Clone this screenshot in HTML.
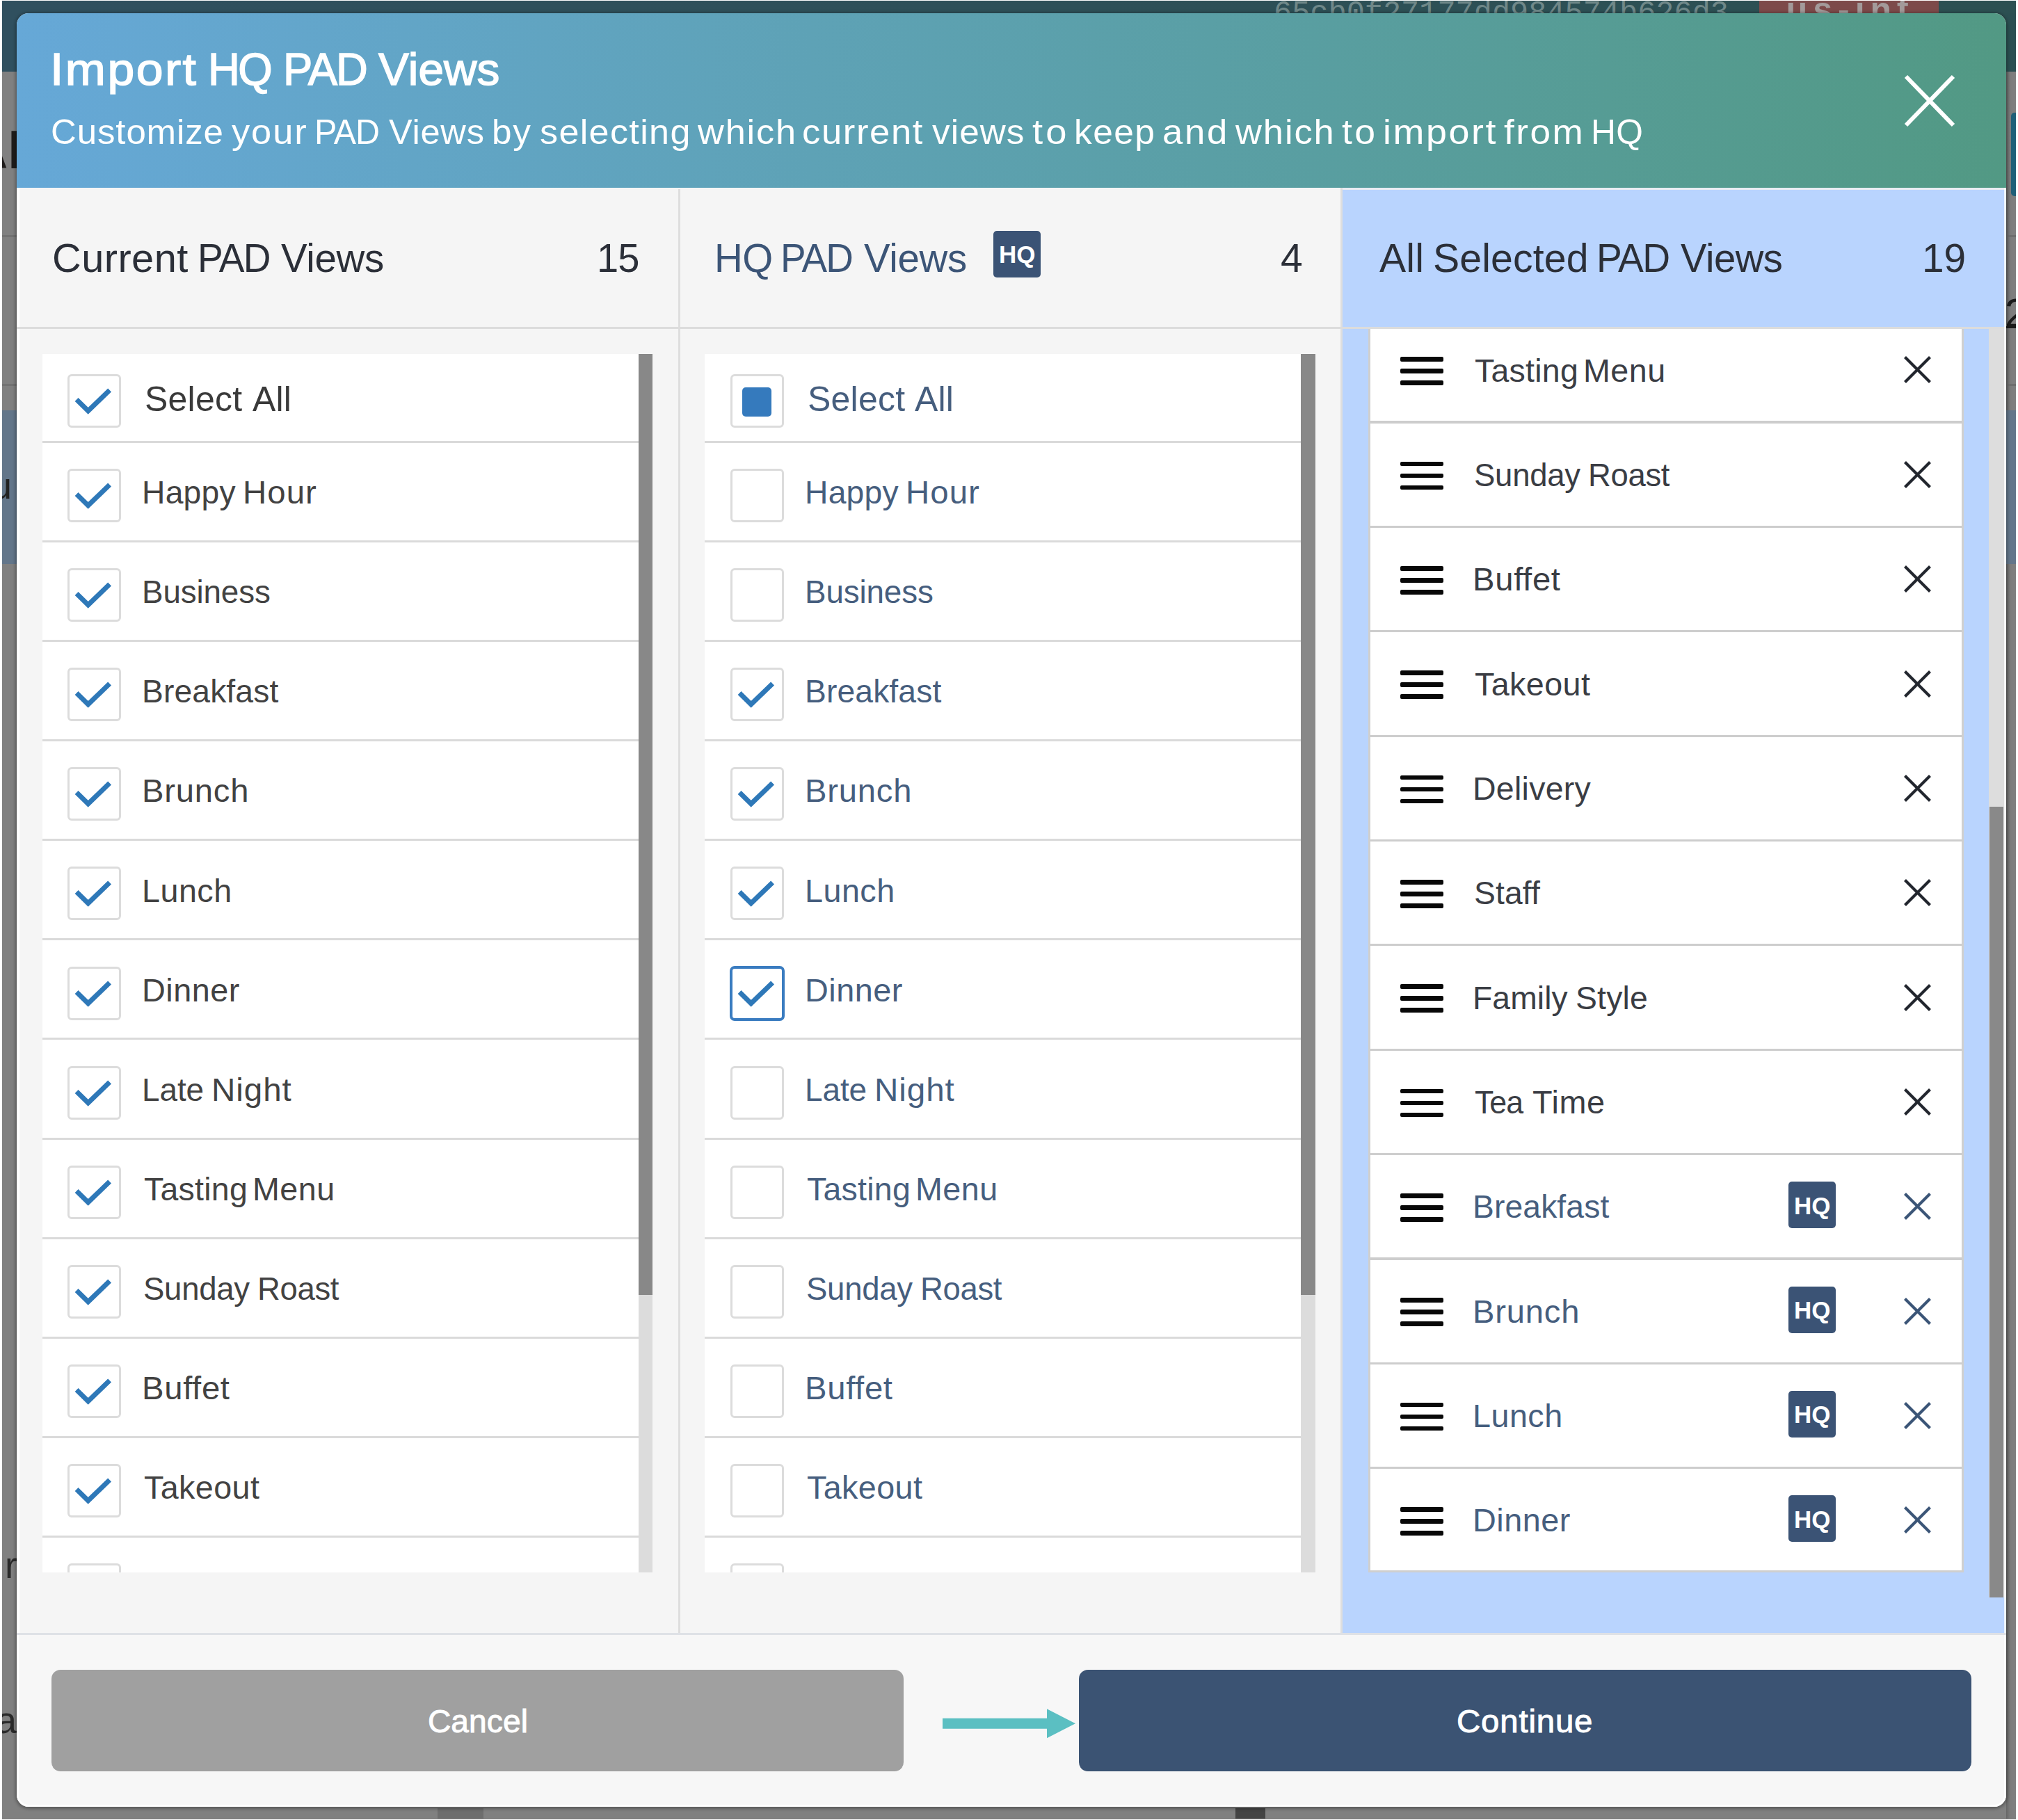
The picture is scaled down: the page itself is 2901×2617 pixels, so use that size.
<!DOCTYPE html>
<html><head><meta charset="utf-8"><title>Import HQ PAD Views</title>
<style>
html,body{margin:0;padding:0;background:#fff;}
body{width:2901px;height:2617px;position:relative;overflow:hidden;font-family:"Liberation Sans",sans-serif;}
.r{position:absolute;}
.t{position:absolute;white-space:nowrap;font-family:"Liberation Sans",sans-serif;}
.w{position:absolute;top:0;white-space:nowrap;}
</style></head><body>
<div class="r" style="left:3.0px;top:1.0px;width:2895.0px;height:2614.6px;background:#808080;"></div>
<div class="r" style="left:3.0px;top:1.0px;width:2895.0px;height:102.0px;background:linear-gradient(to right,#30505f,#2c5052);"></div>
<div class="r" style="left:1825px;top:1px;width:700px;height:18px;overflow:hidden"><div class="t" style="left:6px;top:-3px;font-family:'Liberation Mono',monospace;font-size:43.6px;line-height:43.6px;color:#6f8889">65cb0f27177dd984574b626d3</div></div>
<div class="r" style="left:2529px;top:1px;width:258px;height:18px;background:#7d4a4a;overflow:hidden"><div class="t" style="left:38.7px;top:-12.3px;font-size:50px;line-height:50px;font-weight:bold;color:#a39a9a;letter-spacing:8px">us-int</div></div>
<div class="r" style="left:3.0px;top:590.0px;width:21.0px;height:221.0px;background:#63768a;"></div>
<div class="r" style="left:3.0px;top:338.0px;width:21.0px;height:3.0px;background:#727272;"></div>
<div class="r" style="left:3.0px;top:552.0px;width:21.0px;height:3.0px;background:#727272;"></div>
<div class="r" style="left:3px;top:1px;width:21px;height:2614px;overflow:hidden"><div class="t" style="left:-48px;top:174.5px;font-size:78px;line-height:78px;font-weight:bold;color:#1f1c1b">AD</div><div class="t" style="left:-16px;top:670.3px;font-size:54px;line-height:54px;color:#222">u</div><div class="t" style="left:4px;top:2222.3px;font-size:54px;line-height:54px;color:#2a2a2a">r</div><div class="t" style="left:-9px;top:2444.8px;font-size:54px;line-height:54px;color:#2a2a2a">a</div></div>
<div class="r" style="left:2884.0px;top:103.0px;width:14.0px;height:2512.0px;background:linear-gradient(to right,#666,#7c7c7c 40%,#808080);"></div>
<div class="r" style="left:2884.0px;top:19.0px;width:14.0px;height:84.0px;background:#2b4f52;"></div>
<div class="r" style="left:2891.0px;top:162.0px;width:7.0px;height:120.0px;background:#1f5f78;border-radius:5px 0 0 5px"></div>
<div class="r" style="left:2886.0px;top:338.0px;width:12.0px;height:3.0px;background:#6e6e6e;"></div>
<div class="r" style="left:2886.0px;top:552.0px;width:12.0px;height:3.0px;background:#6e6e6e;"></div>
<div class="r" style="left:2884.0px;top:590.0px;width:14.0px;height:221.0px;background:#63768a;"></div>
<div class="r" style="left:2884px;top:400px;width:14px;height:80px;overflow:hidden"><div class="t" style="left:-2px;top:21px;font-size:58px;line-height:58px;color:#1a1a1a">2</div><div class="r" style="left:0;top:69px;width:14px;height:3px;background:#1a1a1a"></div></div>
<div class="r" style="left:629.0px;top:2600.0px;width:66.0px;height:15.0px;background:#6d6d6d;"></div>
<div class="r" style="left:1776.0px;top:2600.0px;width:43.0px;height:15.0px;background:#444;"></div>
<div class="r" style="left:24px;top:19px;width:2860px;height:2579px;border-radius:17px;overflow:hidden;background:#f5f5f5;box-shadow:0 1px 4px 2px rgba(0,0,0,.3)">
<div class="r" style="left:-24px;top:-19px;width:2901px;height:2617px">
<div class="r" style="left:24.0px;top:19.0px;width:2860.0px;height:251.0px;background:linear-gradient(to right,#66a8d7,#529984);"></div>
<div class="r" style="left:24.5px;top:270.0px;width:4.0px;height:2079.0px;background:linear-gradient(to right,#fff 60%,#f5f5f5);"></div>
<div class="t" style="left:0;top:66.6px;font-size:65.5px;line-height:65.5px;color:#fff;-webkit-text-stroke:1.5px #fff;"><span class="w" style="left:71.6px;letter-spacing:2.33px;transform:scaleX(1.0644);transform-origin:0 50%;">Import</span> <span class="w" style="left:298.6px;letter-spacing:-2.70px;transform:scaleX(0.9703);transform-origin:0 50%;">HQ</span> <span class="w" style="left:406.6px;letter-spacing:-1.95px;transform:scaleX(0.9680);transform-origin:0 50%;">PAD</span> <span class="w" style="left:543.5px;letter-spacing:0.11px;transform:scaleX(1.0026);transform-origin:0 50%;">Views</span></div>
<div class="t" style="left:0;top:165.4px;font-size:49.5px;line-height:49.5px;color:#fff;"><span class="w" style="left:72.8px;letter-spacing:0.86px;transform:scaleX(1.0300);transform-origin:0 50%;">Customize</span> <span class="w" style="left:332.5px;letter-spacing:1.83px;transform:scaleX(1.0573);transform-origin:0 50%;">your</span> <span class="w" style="left:452.0px;letter-spacing:-1.00px;transform:scaleX(0.9783);transform-origin:0 50%;">PAD</span> <span class="w" style="left:558.8px;letter-spacing:0.71px;transform:scaleX(1.0219);transform-origin:0 50%;">Views</span> <span class="w" style="left:707.3px;letter-spacing:1.75px;transform:scaleX(1.0357);transform-origin:0 50%;">by</span> <span class="w" style="left:775.7px;letter-spacing:1.26px;transform:scaleX(1.0532);transform-origin:0 50%;">selecting</span> <span class="w" style="left:1002.8px;letter-spacing:1.75px;transform:scaleX(1.0569);transform-origin:0 50%;">which</span> <span class="w" style="left:1153.3px;letter-spacing:1.55px;transform:scaleX(1.0612);transform-origin:0 50%;">current</span> <span class="w" style="left:1339.5px;letter-spacing:1.06px;transform:scaleX(1.0348);transform-origin:0 50%;">views</span> <span class="w" style="left:1483.9px;letter-spacing:3.75px;transform:scaleX(1.0987);transform-origin:0 50%;">to</span> <span class="w" style="left:1543.6px;letter-spacing:1.35px;transform:scaleX(1.0397);transform-origin:0 50%;">keep</span> <span class="w" style="left:1670.7px;letter-spacing:2.50px;transform:scaleX(1.0649);transform-origin:0 50%;">and</span> <span class="w" style="left:1776.0px;letter-spacing:1.82px;transform:scaleX(1.0593);transform-origin:0 50%;">which</span> <span class="w" style="left:1929.1px;letter-spacing:3.10px;transform:scaleX(1.0816);transform-origin:0 50%;">to</span> <span class="w" style="left:1987.6px;letter-spacing:2.36px;transform:scaleX(1.0881);transform-origin:0 50%;">import</span> <span class="w" style="left:2162.4px;letter-spacing:2.33px;transform:scaleX(1.0737);transform-origin:0 50%;">from</span> <span class="w" style="left:2287.0px;letter-spacing:0.25px;transform:scaleX(1.0037);transform-origin:0 50%;">HQ</span></div>
<svg class="r" style="left:2734px;top:104px" width="80" height="82" viewBox="0 0 80 82"><path d="M6,6 L74,76 M74,6 L6,76" stroke="#fff" stroke-width="6" fill="none"/></svg>
<div class="r" style="left:1930.0px;top:270.0px;width:954.0px;height:2078.0px;background:#b9d4fe;"></div>
<div class="r" style="left:1930.0px;top:270.0px;width:954.0px;height:3.0px;background:#e9ecf2;"></div>
<div class="r" style="left:975.0px;top:272.0px;width:3.0px;height:2077.0px;background:#dedede;"></div>
<div class="r" style="left:1927.0px;top:270.0px;width:3.0px;height:2079.0px;background:#dedede;"></div>
<div class="r" style="left:24.0px;top:470.2px;width:2860.0px;height:3.2px;background:#dcdcdc;"></div>
<div class="t" style="left:0;top:342.7px;font-size:57px;line-height:57px;color:#2b2f38;"><span class="w" style="left:74.8px;letter-spacing:0.43px;transform:scaleX(1.0139);transform-origin:0 50%;">Current</span> <span class="w" style="left:284.1px;letter-spacing:-1.85px;transform:scaleX(0.9648);transform-origin:0 50%;">PAD</span> <span class="w" style="left:403.9px;letter-spacing:-0.36px;transform:scaleX(0.9903);transform-origin:0 50%;">Views</span></div>
<div class="t" style="left:858.1px;letter-spacing:-1.00px;transform:scaleX(0.9825);transform-origin:0 50%;top:342.7px;font-size:57px;line-height:57px;color:#2b2f38;">15</div>
<div class="t" style="left:0;top:342.7px;font-size:57px;line-height:57px;color:#3c5577;"><span class="w" style="left:1026.8px;letter-spacing:-0.60px;transform:scaleX(0.9923);transform-origin:0 50%;">HQ</span> <span class="w" style="left:1122.1px;letter-spacing:-1.98px;transform:scaleX(0.9624);transform-origin:0 50%;">PAD</span> <span class="w" style="left:1242.4px;letter-spacing:-0.36px;transform:scaleX(0.9903);transform-origin:0 50%;">Views</span></div>
<div class="t" style="left:1841.0px;top:342.7px;font-size:57px;line-height:57px;color:#2b2f38;">4</div>
<div class="t" style="left:0;top:342.7px;font-size:57px;line-height:57px;color:#2b2f38;"><span class="w" style="left:1983.3px;letter-spacing:0.12px;transform:scaleX(1.0042);transform-origin:0 50%;">All</span> <span class="w" style="left:2059.7px;letter-spacing:0.13px;transform:scaleX(1.0042);transform-origin:0 50%;">Selected</span> <span class="w" style="left:2294.5px;letter-spacing:-1.70px;transform:scaleX(0.9676);transform-origin:0 50%;">PAD</span> <span class="w" style="left:2415.9px;letter-spacing:-0.53px;transform:scaleX(0.9859);transform-origin:0 50%;">Views</span></div>
<div class="t" style="left:2763.0px;letter-spacing:-0.20px;transform:scaleX(0.9965);transform-origin:0 50%;top:342.7px;font-size:57px;line-height:57px;color:#2b2f38;">19</div>
<div class="r" style="left:1428px;top:332px;width:68px;height:67px;background:#3b5375;border-radius:5px"></div>
<div class="t" style="left:1436.0px;top:348.4px;font-size:35px;line-height:35px;color:#fff;font-weight:bold;">HQ</div>
<div class="r" style="left:60.5px;top:509px;width:877.5px;height:1752px;overflow:hidden;background:#fff">
<div class="r" style="left:-60.5px;top:-509px;width:2901px;height:2617px">
<div class="r" style="left:60.5px;top:633.8px;width:857.0px;height:3.0px;background:#dadada;"></div>
<div class="r" style="left:60.5px;top:776.9px;width:857.0px;height:3.0px;background:#dadada;"></div>
<div class="r" style="left:60.5px;top:920.0px;width:857.0px;height:3.0px;background:#dadada;"></div>
<div class="r" style="left:60.5px;top:1063.1px;width:857.0px;height:3.0px;background:#dadada;"></div>
<div class="r" style="left:60.5px;top:1206.2px;width:857.0px;height:3.0px;background:#dadada;"></div>
<div class="r" style="left:60.5px;top:1349.3px;width:857.0px;height:3.0px;background:#dadada;"></div>
<div class="r" style="left:60.5px;top:1492.4px;width:857.0px;height:3.0px;background:#dadada;"></div>
<div class="r" style="left:60.5px;top:1635.5px;width:857.0px;height:3.0px;background:#dadada;"></div>
<div class="r" style="left:60.5px;top:1778.6px;width:857.0px;height:3.0px;background:#dadada;"></div>
<div class="r" style="left:60.5px;top:1921.7px;width:857.0px;height:3.0px;background:#dadada;"></div>
<div class="r" style="left:60.5px;top:2064.8px;width:857.0px;height:3.0px;background:#dadada;"></div>
<div class="r" style="left:60.5px;top:2207.9px;width:857.0px;height:3.0px;background:#dadada;"></div>
<div class="r" style="left:60.5px;top:2351.0px;width:857.0px;height:3.0px;background:#dadada;"></div>
<div class="r" style="left:97.0px;top:538.0px;width:77px;height:77px;box-sizing:border-box;border:3px solid #dcdcdc;border-radius:6px;background:#fff"><div style="position:absolute;left:-3px;top:-3px;width:77px;height:77px"><svg width="77" height="77" viewBox="0 0 77 77" style="position:absolute;left:0;top:0"><path d="M13.1,36.6 L29.7,52.8 L60.6,23" stroke="#2e78b8" stroke-width="7" fill="none"/></svg></div></div>
<div class="t" style="left:0;top:549.1px;font-size:49.5px;line-height:49.5px;color:#3a3a3a;"><span class="w" style="left:208.0px;letter-spacing:0.24px;transform:scaleX(1.0089);transform-origin:0 50%;">Select</span> <span class="w" style="left:362.5px;letter-spacing:0.22px;transform:scaleX(1.0087);transform-origin:0 50%;">All</span></div>
<div class="r" style="left:97.0px;top:674.0px;width:77px;height:77px;box-sizing:border-box;border:3px solid #dcdcdc;border-radius:6px;background:#fff"><div style="position:absolute;left:-3px;top:-3px;width:77px;height:77px"><svg width="77" height="77" viewBox="0 0 77 77" style="position:absolute;left:0;top:0"><path d="M13.1,36.6 L29.7,52.8 L60.6,23" stroke="#2e78b8" stroke-width="7" fill="none"/></svg></div></div>
<div class="t" style="left:0;top:685.1px;font-size:46px;line-height:46px;color:#424242;"><span class="w" style="left:203.9px;letter-spacing:0.20px;transform:scaleX(1.0062);transform-origin:0 50%;">Happy</span> <span class="w" style="left:349.4px;letter-spacing:0.98px;transform:scaleX(1.0311);transform-origin:0 50%;">Hour</span></div>
<div class="r" style="left:97.0px;top:817.1px;width:77px;height:77px;box-sizing:border-box;border:3px solid #dcdcdc;border-radius:6px;background:#fff"><div style="position:absolute;left:-3px;top:-3px;width:77px;height:77px"><svg width="77" height="77" viewBox="0 0 77 77" style="position:absolute;left:0;top:0"><path d="M13.1,36.6 L29.7,52.8 L60.6,23" stroke="#2e78b8" stroke-width="7" fill="none"/></svg></div></div>
<div class="t" style="left:203.9px;letter-spacing:-0.13px;transform:scaleX(0.9950);transform-origin:0 50%;top:828.2px;font-size:46px;line-height:46px;color:#424242;">Business</div>
<div class="r" style="left:97.0px;top:960.2px;width:77px;height:77px;box-sizing:border-box;border:3px solid #dcdcdc;border-radius:6px;background:#fff"><div style="position:absolute;left:-3px;top:-3px;width:77px;height:77px"><svg width="77" height="77" viewBox="0 0 77 77" style="position:absolute;left:0;top:0"><path d="M13.1,36.6 L29.7,52.8 L60.6,23" stroke="#2e78b8" stroke-width="7" fill="none"/></svg></div></div>
<div class="t" style="left:203.9px;letter-spacing:0.12px;transform:scaleX(1.0050);transform-origin:0 50%;top:971.3px;font-size:46px;line-height:46px;color:#424242;">Breakfast</div>
<div class="r" style="left:97.0px;top:1103.3px;width:77px;height:77px;box-sizing:border-box;border:3px solid #dcdcdc;border-radius:6px;background:#fff"><div style="position:absolute;left:-3px;top:-3px;width:77px;height:77px"><svg width="77" height="77" viewBox="0 0 77 77" style="position:absolute;left:0;top:0"><path d="M13.1,36.6 L29.7,52.8 L60.6,23" stroke="#2e78b8" stroke-width="7" fill="none"/></svg></div></div>
<div class="t" style="left:203.8px;letter-spacing:0.74px;transform:scaleX(1.0266);transform-origin:0 50%;top:1114.4px;font-size:46px;line-height:46px;color:#424242;">Brunch</div>
<div class="r" style="left:97.0px;top:1246.4px;width:77px;height:77px;box-sizing:border-box;border:3px solid #dcdcdc;border-radius:6px;background:#fff"><div style="position:absolute;left:-3px;top:-3px;width:77px;height:77px"><svg width="77" height="77" viewBox="0 0 77 77" style="position:absolute;left:0;top:0"><path d="M13.1,36.6 L29.7,52.8 L60.6,23" stroke="#2e78b8" stroke-width="7" fill="none"/></svg></div></div>
<div class="t" style="left:203.8px;letter-spacing:0.46px;transform:scaleX(1.0155);transform-origin:0 50%;top:1257.5px;font-size:46px;line-height:46px;color:#424242;">Lunch</div>
<div class="r" style="left:97.0px;top:1389.5px;width:77px;height:77px;box-sizing:border-box;border:3px solid #dcdcdc;border-radius:6px;background:#fff"><div style="position:absolute;left:-3px;top:-3px;width:77px;height:77px"><svg width="77" height="77" viewBox="0 0 77 77" style="position:absolute;left:0;top:0"><path d="M13.1,36.6 L29.7,52.8 L60.6,23" stroke="#2e78b8" stroke-width="7" fill="none"/></svg></div></div>
<div class="t" style="left:203.8px;letter-spacing:0.46px;transform:scaleX(1.0176);transform-origin:0 50%;top:1400.6px;font-size:46px;line-height:46px;color:#424242;">Dinner</div>
<div class="r" style="left:97.0px;top:1532.6px;width:77px;height:77px;box-sizing:border-box;border:3px solid #dcdcdc;border-radius:6px;background:#fff"><div style="position:absolute;left:-3px;top:-3px;width:77px;height:77px"><svg width="77" height="77" viewBox="0 0 77 77" style="position:absolute;left:0;top:0"><path d="M13.1,36.6 L29.7,52.8 L60.6,23" stroke="#2e78b8" stroke-width="7" fill="none"/></svg></div></div>
<div class="t" style="left:0;top:1543.7px;font-size:46px;line-height:46px;color:#424242;"><span class="w" style="left:203.9px;letter-spacing:-0.07px;transform:scaleX(0.9976);transform-origin:0 50%;">Late</span> <span class="w" style="left:303.9px;letter-spacing:0.89px;transform:scaleX(1.0345);transform-origin:0 50%;">Night</span></div>
<div class="r" style="left:97.0px;top:1675.7px;width:77px;height:77px;box-sizing:border-box;border:3px solid #dcdcdc;border-radius:6px;background:#fff"><div style="position:absolute;left:-3px;top:-3px;width:77px;height:77px"><svg width="77" height="77" viewBox="0 0 77 77" style="position:absolute;left:0;top:0"><path d="M13.1,36.6 L29.7,52.8 L60.6,23" stroke="#2e78b8" stroke-width="7" fill="none"/></svg></div></div>
<div class="t" style="left:0;top:1686.8px;font-size:46px;line-height:46px;color:#424242;"><span class="w" style="left:206.9px;letter-spacing:0.25px;transform:scaleX(1.0106);transform-origin:0 50%;">Tasting</span> <span class="w" style="left:363.0px;letter-spacing:0.50px;transform:scaleX(1.0139);transform-origin:0 50%;">Menu</span></div>
<div class="r" style="left:97.0px;top:1818.8px;width:77px;height:77px;box-sizing:border-box;border:3px solid #dcdcdc;border-radius:6px;background:#fff"><div style="position:absolute;left:-3px;top:-3px;width:77px;height:77px"><svg width="77" height="77" viewBox="0 0 77 77" style="position:absolute;left:0;top:0"><path d="M13.1,36.6 L29.7,52.8 L60.6,23" stroke="#2e78b8" stroke-width="7" fill="none"/></svg></div></div>
<div class="t" style="left:0;top:1829.9px;font-size:46px;line-height:46px;color:#424242;"><span class="w" style="left:205.9px;letter-spacing:-0.29px;transform:scaleX(0.9906);transform-origin:0 50%;">Sunday</span> <span class="w" style="left:370.2px;letter-spacing:-0.34px;transform:scaleX(0.9884);transform-origin:0 50%;">Roast</span></div>
<div class="r" style="left:97.0px;top:1961.9px;width:77px;height:77px;box-sizing:border-box;border:3px solid #dcdcdc;border-radius:6px;background:#fff"><div style="position:absolute;left:-3px;top:-3px;width:77px;height:77px"><svg width="77" height="77" viewBox="0 0 77 77" style="position:absolute;left:0;top:0"><path d="M13.1,36.6 L29.7,52.8 L60.6,23" stroke="#2e78b8" stroke-width="7" fill="none"/></svg></div></div>
<div class="t" style="left:203.8px;letter-spacing:0.64px;transform:scaleX(1.0278);transform-origin:0 50%;top:1973.0px;font-size:46px;line-height:46px;color:#424242;">Buffet</div>
<div class="r" style="left:97.0px;top:2105.0px;width:77px;height:77px;box-sizing:border-box;border:3px solid #dcdcdc;border-radius:6px;background:#fff"><div style="position:absolute;left:-3px;top:-3px;width:77px;height:77px"><svg width="77" height="77" viewBox="0 0 77 77" style="position:absolute;left:0;top:0"><path d="M13.1,36.6 L29.7,52.8 L60.6,23" stroke="#2e78b8" stroke-width="7" fill="none"/></svg></div></div>
<div class="t" style="left:206.9px;letter-spacing:0.40px;transform:scaleX(1.0150);transform-origin:0 50%;top:2116.1px;font-size:46px;line-height:46px;color:#424242;">Takeout</div>
<div class="r" style="left:97.0px;top:2248.1px;width:77px;height:77px;box-sizing:border-box;border:3px solid #dcdcdc;border-radius:6px;background:#fff"><div style="position:absolute;left:-3px;top:-3px;width:77px;height:77px"><svg width="77" height="77" viewBox="0 0 77 77" style="position:absolute;left:0;top:0"><path d="M13.1,36.6 L29.7,52.8 L60.6,23" stroke="#2e78b8" stroke-width="7" fill="none"/></svg></div></div>
<div class="r" style="left:917.5px;top:509.0px;width:20.5px;height:1752.0px;background:#dcdcdc;"></div>
<div class="r" style="left:917.5px;top:509.0px;width:20.5px;height:1353.0px;background:#888;"></div>
</div></div>
<div class="r" style="left:1013.4px;top:509px;width:877.5px;height:1752px;overflow:hidden;background:#fff">
<div class="r" style="left:-1013.4px;top:-509px;width:2901px;height:2617px">
<div class="r" style="left:1013.4px;top:633.8px;width:857.0px;height:3.0px;background:#dadada;"></div>
<div class="r" style="left:1013.4px;top:776.9px;width:857.0px;height:3.0px;background:#dadada;"></div>
<div class="r" style="left:1013.4px;top:920.0px;width:857.0px;height:3.0px;background:#dadada;"></div>
<div class="r" style="left:1013.4px;top:1063.1px;width:857.0px;height:3.0px;background:#dadada;"></div>
<div class="r" style="left:1013.4px;top:1206.2px;width:857.0px;height:3.0px;background:#dadada;"></div>
<div class="r" style="left:1013.4px;top:1349.3px;width:857.0px;height:3.0px;background:#dadada;"></div>
<div class="r" style="left:1013.4px;top:1492.4px;width:857.0px;height:3.0px;background:#dadada;"></div>
<div class="r" style="left:1013.4px;top:1635.5px;width:857.0px;height:3.0px;background:#dadada;"></div>
<div class="r" style="left:1013.4px;top:1778.6px;width:857.0px;height:3.0px;background:#dadada;"></div>
<div class="r" style="left:1013.4px;top:1921.7px;width:857.0px;height:3.0px;background:#dadada;"></div>
<div class="r" style="left:1013.4px;top:2064.8px;width:857.0px;height:3.0px;background:#dadada;"></div>
<div class="r" style="left:1013.4px;top:2207.9px;width:857.0px;height:3.0px;background:#dadada;"></div>
<div class="r" style="left:1013.4px;top:2351.0px;width:857.0px;height:3.0px;background:#dadada;"></div>
<div class="r" style="left:1049.9px;top:538.0px;width:77px;height:77px;box-sizing:border-box;border:3px solid #dcdcdc;border-radius:6px;background:#fff"><div style="position:absolute;left:-3px;top:-3px;width:77px;height:77px"><div style="position:absolute;left:17.5px;top:18.5px;width:42px;height:42px;border-radius:5px;background:#357abd"></div></div></div>
<div class="t" style="left:0;top:549.1px;font-size:49.5px;line-height:49.5px;color:#465e7e;"><span class="w" style="left:1160.9px;letter-spacing:0.24px;transform:scaleX(1.0089);transform-origin:0 50%;">Select</span> <span class="w" style="left:1315.4px;letter-spacing:0.22px;transform:scaleX(1.0087);transform-origin:0 50%;">All</span></div>
<div class="r" style="left:1049.9px;top:674.0px;width:77px;height:77px;box-sizing:border-box;border:3px solid #dcdcdc;border-radius:6px;background:#fff"><div style="position:absolute;left:-3px;top:-3px;width:77px;height:77px"></div></div>
<div class="t" style="left:0;top:685.1px;font-size:46px;line-height:46px;color:#465e7e;"><span class="w" style="left:1156.8px;letter-spacing:0.20px;transform:scaleX(1.0062);transform-origin:0 50%;">Happy</span> <span class="w" style="left:1302.3px;letter-spacing:0.98px;transform:scaleX(1.0311);transform-origin:0 50%;">Hour</span></div>
<div class="r" style="left:1049.9px;top:817.1px;width:77px;height:77px;box-sizing:border-box;border:3px solid #dcdcdc;border-radius:6px;background:#fff"><div style="position:absolute;left:-3px;top:-3px;width:77px;height:77px"></div></div>
<div class="t" style="left:1156.8px;letter-spacing:-0.13px;transform:scaleX(0.9950);transform-origin:0 50%;top:828.2px;font-size:46px;line-height:46px;color:#465e7e;">Business</div>
<div class="r" style="left:1049.9px;top:960.2px;width:77px;height:77px;box-sizing:border-box;border:3px solid #dcdcdc;border-radius:6px;background:#fff"><div style="position:absolute;left:-3px;top:-3px;width:77px;height:77px"><svg width="77" height="77" viewBox="0 0 77 77" style="position:absolute;left:0;top:0"><path d="M13.1,36.6 L29.7,52.8 L60.6,23" stroke="#2e78b8" stroke-width="7" fill="none"/></svg></div></div>
<div class="t" style="left:1156.8px;letter-spacing:0.12px;transform:scaleX(1.0050);transform-origin:0 50%;top:971.3px;font-size:46px;line-height:46px;color:#465e7e;">Breakfast</div>
<div class="r" style="left:1049.9px;top:1103.3px;width:77px;height:77px;box-sizing:border-box;border:3px solid #dcdcdc;border-radius:6px;background:#fff"><div style="position:absolute;left:-3px;top:-3px;width:77px;height:77px"><svg width="77" height="77" viewBox="0 0 77 77" style="position:absolute;left:0;top:0"><path d="M13.1,36.6 L29.7,52.8 L60.6,23" stroke="#2e78b8" stroke-width="7" fill="none"/></svg></div></div>
<div class="t" style="left:1156.7px;letter-spacing:0.74px;transform:scaleX(1.0266);transform-origin:0 50%;top:1114.4px;font-size:46px;line-height:46px;color:#465e7e;">Brunch</div>
<div class="r" style="left:1049.9px;top:1246.4px;width:77px;height:77px;box-sizing:border-box;border:3px solid #dcdcdc;border-radius:6px;background:#fff"><div style="position:absolute;left:-3px;top:-3px;width:77px;height:77px"><svg width="77" height="77" viewBox="0 0 77 77" style="position:absolute;left:0;top:0"><path d="M13.1,36.6 L29.7,52.8 L60.6,23" stroke="#2e78b8" stroke-width="7" fill="none"/></svg></div></div>
<div class="t" style="left:1156.7px;letter-spacing:0.46px;transform:scaleX(1.0155);transform-origin:0 50%;top:1257.5px;font-size:46px;line-height:46px;color:#465e7e;">Lunch</div>
<div class="r" style="left:1048.9px;top:1388.5px;width:79px;height:79px;box-sizing:border-box;border:4px solid #3a7cc0;border-radius:7px;background:#fff"><div style="position:absolute;left:-3px;top:-3px;width:77px;height:77px"><svg width="77" height="77" viewBox="0 0 77 77" style="position:absolute;left:0;top:0"><path d="M13.1,36.6 L29.7,52.8 L60.6,23" stroke="#2e78b8" stroke-width="7" fill="none"/></svg></div></div>
<div class="t" style="left:1156.7px;letter-spacing:0.46px;transform:scaleX(1.0176);transform-origin:0 50%;top:1400.6px;font-size:46px;line-height:46px;color:#465e7e;">Dinner</div>
<div class="r" style="left:1049.9px;top:1532.6px;width:77px;height:77px;box-sizing:border-box;border:3px solid #dcdcdc;border-radius:6px;background:#fff"><div style="position:absolute;left:-3px;top:-3px;width:77px;height:77px"></div></div>
<div class="t" style="left:0;top:1543.7px;font-size:46px;line-height:46px;color:#465e7e;"><span class="w" style="left:1156.8px;letter-spacing:-0.07px;transform:scaleX(0.9976);transform-origin:0 50%;">Late</span> <span class="w" style="left:1256.8px;letter-spacing:0.89px;transform:scaleX(1.0345);transform-origin:0 50%;">Night</span></div>
<div class="r" style="left:1049.9px;top:1675.7px;width:77px;height:77px;box-sizing:border-box;border:3px solid #dcdcdc;border-radius:6px;background:#fff"><div style="position:absolute;left:-3px;top:-3px;width:77px;height:77px"></div></div>
<div class="t" style="left:0;top:1686.8px;font-size:46px;line-height:46px;color:#465e7e;"><span class="w" style="left:1159.8px;letter-spacing:0.25px;transform:scaleX(1.0106);transform-origin:0 50%;">Tasting</span> <span class="w" style="left:1315.9px;letter-spacing:0.50px;transform:scaleX(1.0139);transform-origin:0 50%;">Menu</span></div>
<div class="r" style="left:1049.9px;top:1818.8px;width:77px;height:77px;box-sizing:border-box;border:3px solid #dcdcdc;border-radius:6px;background:#fff"><div style="position:absolute;left:-3px;top:-3px;width:77px;height:77px"></div></div>
<div class="t" style="left:0;top:1829.9px;font-size:46px;line-height:46px;color:#465e7e;"><span class="w" style="left:1158.8px;letter-spacing:-0.29px;transform:scaleX(0.9906);transform-origin:0 50%;">Sunday</span> <span class="w" style="left:1323.1px;letter-spacing:-0.34px;transform:scaleX(0.9884);transform-origin:0 50%;">Roast</span></div>
<div class="r" style="left:1049.9px;top:1961.9px;width:77px;height:77px;box-sizing:border-box;border:3px solid #dcdcdc;border-radius:6px;background:#fff"><div style="position:absolute;left:-3px;top:-3px;width:77px;height:77px"></div></div>
<div class="t" style="left:1156.7px;letter-spacing:0.64px;transform:scaleX(1.0278);transform-origin:0 50%;top:1973.0px;font-size:46px;line-height:46px;color:#465e7e;">Buffet</div>
<div class="r" style="left:1049.9px;top:2105.0px;width:77px;height:77px;box-sizing:border-box;border:3px solid #dcdcdc;border-radius:6px;background:#fff"><div style="position:absolute;left:-3px;top:-3px;width:77px;height:77px"></div></div>
<div class="t" style="left:1159.8px;letter-spacing:0.40px;transform:scaleX(1.0150);transform-origin:0 50%;top:2116.1px;font-size:46px;line-height:46px;color:#465e7e;">Takeout</div>
<div class="r" style="left:1049.9px;top:2248.1px;width:77px;height:77px;box-sizing:border-box;border:3px solid #dcdcdc;border-radius:6px;background:#fff"><div style="position:absolute;left:-3px;top:-3px;width:77px;height:77px"></div></div>
<div class="r" style="left:1870.4px;top:509.0px;width:20.5px;height:1752.0px;background:#dcdcdc;"></div>
<div class="r" style="left:1870.4px;top:509.0px;width:20.5px;height:1353.0px;background:#888;"></div>
</div></div>
<div class="r" style="left:1967px;top:473.4px;width:855.5px;height:1788.1px;overflow:hidden;background:#fff;box-sizing:border-box;border:solid #cfcfcf;border-width:0 3px 3px 3px">
<div class="r" style="left:-1970px;top:-473.4px;width:2901px;height:2617px">
<div class="r" style="left:1967.0px;top:605.4px;width:855.5px;height:3.4px;background:#cdcdcd;"></div>
<div class="r" style="left:1967.0px;top:755.8px;width:855.5px;height:3.4px;background:#cdcdcd;"></div>
<div class="r" style="left:1967.0px;top:906.1px;width:855.5px;height:3.4px;background:#cdcdcd;"></div>
<div class="r" style="left:1967.0px;top:1056.5px;width:855.5px;height:3.4px;background:#cdcdcd;"></div>
<div class="r" style="left:1967.0px;top:1206.8px;width:855.5px;height:3.4px;background:#cdcdcd;"></div>
<div class="r" style="left:1967.0px;top:1357.1px;width:855.5px;height:3.4px;background:#cdcdcd;"></div>
<div class="r" style="left:1967.0px;top:1507.5px;width:855.5px;height:3.4px;background:#cdcdcd;"></div>
<div class="r" style="left:1967.0px;top:1657.9px;width:855.5px;height:3.4px;background:#cdcdcd;"></div>
<div class="r" style="left:1967.0px;top:1808.2px;width:855.5px;height:3.4px;background:#cdcdcd;"></div>
<div class="r" style="left:1967.0px;top:1958.5px;width:855.5px;height:3.4px;background:#cdcdcd;"></div>
<div class="r" style="left:1967.0px;top:2108.9px;width:855.5px;height:3.4px;background:#cdcdcd;"></div>
<div class="r" style="left:2013.0px;top:513.3px;width:62.0px;height:6.7px;background:#080808;border-radius:2px"></div>
<div class="r" style="left:2013.0px;top:530.3px;width:62.0px;height:6.7px;background:#080808;border-radius:2px"></div>
<div class="r" style="left:2013.0px;top:547.3px;width:62.0px;height:6.7px;background:#080808;border-radius:2px"></div>
<div class="t" style="left:0;top:509.6px;font-size:46px;line-height:46px;color:#3a3d44;"><span class="w" style="left:2119.8px;letter-spacing:0.25px;transform:scaleX(1.0106);transform-origin:0 50%;">Tasting</span> <span class="w" style="left:2275.9px;letter-spacing:0.50px;transform:scaleX(1.0139);transform-origin:0 50%;">Menu</span></div>
<svg class="r" style="left:2734px;top:509.4px" width="45" height="45" viewBox="0 0 45 45"><path d="M4.5,4.5 L40.5,40.5 M40.5,4.5 L4.5,40.5" stroke="#22262e" stroke-width="4.2" fill="none"/></svg>
<div class="r" style="left:2013.0px;top:663.6px;width:62.0px;height:6.7px;background:#080808;border-radius:2px"></div>
<div class="r" style="left:2013.0px;top:680.6px;width:62.0px;height:6.7px;background:#080808;border-radius:2px"></div>
<div class="r" style="left:2013.0px;top:697.6px;width:62.0px;height:6.7px;background:#080808;border-radius:2px"></div>
<div class="t" style="left:0;top:659.9px;font-size:46px;line-height:46px;color:#3a3d44;"><span class="w" style="left:2118.8px;letter-spacing:-0.29px;transform:scaleX(0.9906);transform-origin:0 50%;">Sunday</span> <span class="w" style="left:2283.1px;letter-spacing:-0.34px;transform:scaleX(0.9884);transform-origin:0 50%;">Roast</span></div>
<svg class="r" style="left:2734px;top:659.8px" width="45" height="45" viewBox="0 0 45 45"><path d="M4.5,4.5 L40.5,40.5 M40.5,4.5 L4.5,40.5" stroke="#22262e" stroke-width="4.2" fill="none"/></svg>
<div class="r" style="left:2013.0px;top:814.0px;width:62.0px;height:6.7px;background:#080808;border-radius:2px"></div>
<div class="r" style="left:2013.0px;top:831.0px;width:62.0px;height:6.7px;background:#080808;border-radius:2px"></div>
<div class="r" style="left:2013.0px;top:848.0px;width:62.0px;height:6.7px;background:#080808;border-radius:2px"></div>
<div class="t" style="left:2116.7px;letter-spacing:0.64px;transform:scaleX(1.0278);transform-origin:0 50%;top:810.3px;font-size:46px;line-height:46px;color:#3a3d44;">Buffet</div>
<svg class="r" style="left:2734px;top:810.1px" width="45" height="45" viewBox="0 0 45 45"><path d="M4.5,4.5 L40.5,40.5 M40.5,4.5 L4.5,40.5" stroke="#22262e" stroke-width="4.2" fill="none"/></svg>
<div class="r" style="left:2013.0px;top:964.3px;width:62.0px;height:6.7px;background:#080808;border-radius:2px"></div>
<div class="r" style="left:2013.0px;top:981.3px;width:62.0px;height:6.7px;background:#080808;border-radius:2px"></div>
<div class="r" style="left:2013.0px;top:998.3px;width:62.0px;height:6.7px;background:#080808;border-radius:2px"></div>
<div class="t" style="left:2119.8px;letter-spacing:0.40px;transform:scaleX(1.0150);transform-origin:0 50%;top:960.6px;font-size:46px;line-height:46px;color:#3a3d44;">Takeout</div>
<svg class="r" style="left:2734px;top:960.5px" width="45" height="45" viewBox="0 0 45 45"><path d="M4.5,4.5 L40.5,40.5 M40.5,4.5 L4.5,40.5" stroke="#22262e" stroke-width="4.2" fill="none"/></svg>
<div class="r" style="left:2013.0px;top:1114.7px;width:62.0px;height:6.7px;background:#080808;border-radius:2px"></div>
<div class="r" style="left:2013.0px;top:1131.7px;width:62.0px;height:6.7px;background:#080808;border-radius:2px"></div>
<div class="r" style="left:2013.0px;top:1148.7px;width:62.0px;height:6.7px;background:#080808;border-radius:2px"></div>
<div class="t" style="left:2116.8px;letter-spacing:0.26px;transform:scaleX(1.0111);transform-origin:0 50%;top:1111.0px;font-size:46px;line-height:46px;color:#3a3d44;">Delivery</div>
<svg class="r" style="left:2734px;top:1110.8px" width="45" height="45" viewBox="0 0 45 45"><path d="M4.5,4.5 L40.5,40.5 M40.5,4.5 L4.5,40.5" stroke="#22262e" stroke-width="4.2" fill="none"/></svg>
<div class="r" style="left:2013.0px;top:1265.0px;width:62.0px;height:6.7px;background:#080808;border-radius:2px"></div>
<div class="r" style="left:2013.0px;top:1282.0px;width:62.0px;height:6.7px;background:#080808;border-radius:2px"></div>
<div class="r" style="left:2013.0px;top:1299.0px;width:62.0px;height:6.7px;background:#080808;border-radius:2px"></div>
<div class="t" style="left:2118.8px;letter-spacing:0.12px;transform:scaleX(1.0054);transform-origin:0 50%;top:1261.3px;font-size:46px;line-height:46px;color:#3a3d44;">Staff</div>
<svg class="r" style="left:2734px;top:1261.2px" width="45" height="45" viewBox="0 0 45 45"><path d="M4.5,4.5 L40.5,40.5 M40.5,4.5 L4.5,40.5" stroke="#22262e" stroke-width="4.2" fill="none"/></svg>
<div class="r" style="left:2013.0px;top:1415.4px;width:62.0px;height:6.7px;background:#080808;border-radius:2px"></div>
<div class="r" style="left:2013.0px;top:1432.4px;width:62.0px;height:6.7px;background:#080808;border-radius:2px"></div>
<div class="r" style="left:2013.0px;top:1449.4px;width:62.0px;height:6.7px;background:#080808;border-radius:2px"></div>
<div class="t" style="left:0;top:1411.7px;font-size:46px;line-height:46px;color:#3a3d44;"><span class="w" style="left:2116.8px;letter-spacing:0.12px;transform:scaleX(1.0046);transform-origin:0 50%;">Family</span> <span class="w" style="left:2264.7px;letter-spacing:0.19px;transform:scaleX(1.0076);transform-origin:0 50%;">Style</span></div>
<svg class="r" style="left:2734px;top:1411.5px" width="45" height="45" viewBox="0 0 45 45"><path d="M4.5,4.5 L40.5,40.5 M40.5,4.5 L4.5,40.5" stroke="#22262e" stroke-width="4.2" fill="none"/></svg>
<div class="r" style="left:2013.0px;top:1565.7px;width:62.0px;height:6.7px;background:#080808;border-radius:2px"></div>
<div class="r" style="left:2013.0px;top:1582.7px;width:62.0px;height:6.7px;background:#080808;border-radius:2px"></div>
<div class="r" style="left:2013.0px;top:1599.7px;width:62.0px;height:6.7px;background:#080808;border-radius:2px"></div>
<div class="t" style="left:0;top:1562.0px;font-size:46px;line-height:46px;color:#3a3d44;"><span class="w" style="left:2119.8px;letter-spacing:-1.02px;transform:scaleX(0.9719);transform-origin:0 50%;">Tea</span> <span class="w" style="left:2203.3px;letter-spacing:0.58px;transform:scaleX(1.0179);transform-origin:0 50%;">Time</span></div>
<svg class="r" style="left:2734px;top:1561.9px" width="45" height="45" viewBox="0 0 45 45"><path d="M4.5,4.5 L40.5,40.5 M40.5,4.5 L4.5,40.5" stroke="#22262e" stroke-width="4.2" fill="none"/></svg>
<div class="r" style="left:2013.0px;top:1716.1px;width:62.0px;height:6.7px;background:#080808;border-radius:2px"></div>
<div class="r" style="left:2013.0px;top:1733.1px;width:62.0px;height:6.7px;background:#080808;border-radius:2px"></div>
<div class="r" style="left:2013.0px;top:1750.1px;width:62.0px;height:6.7px;background:#080808;border-radius:2px"></div>
<div class="t" style="left:2116.8px;letter-spacing:0.12px;transform:scaleX(1.0050);transform-origin:0 50%;top:1712.4px;font-size:46px;line-height:46px;color:#465e7e;">Breakfast</div>
<svg class="r" style="left:2734px;top:1712.2px" width="45" height="45" viewBox="0 0 45 45"><path d="M4.5,4.5 L40.5,40.5 M40.5,4.5 L4.5,40.5" stroke="#3b5577" stroke-width="4.2" fill="none"/></svg>
<div class="r" style="left:2571px;top:1699.2px;width:68px;height:67px;background:#3b5375;border-radius:5px"></div>
<div class="t" style="left:2579.0px;top:1715.6px;font-size:35px;line-height:35px;color:#fff;font-weight:bold;">HQ</div>
<div class="r" style="left:2013.0px;top:1866.4px;width:62.0px;height:6.7px;background:#080808;border-radius:2px"></div>
<div class="r" style="left:2013.0px;top:1883.4px;width:62.0px;height:6.7px;background:#080808;border-radius:2px"></div>
<div class="r" style="left:2013.0px;top:1900.4px;width:62.0px;height:6.7px;background:#080808;border-radius:2px"></div>
<div class="t" style="left:2116.7px;letter-spacing:0.74px;transform:scaleX(1.0266);transform-origin:0 50%;top:1862.7px;font-size:46px;line-height:46px;color:#465e7e;">Brunch</div>
<svg class="r" style="left:2734px;top:1862.6px" width="45" height="45" viewBox="0 0 45 45"><path d="M4.5,4.5 L40.5,40.5 M40.5,4.5 L4.5,40.5" stroke="#3b5577" stroke-width="4.2" fill="none"/></svg>
<div class="r" style="left:2571px;top:1849.6px;width:68px;height:67px;background:#3b5375;border-radius:5px"></div>
<div class="t" style="left:2579.0px;top:1866.0px;font-size:35px;line-height:35px;color:#fff;font-weight:bold;">HQ</div>
<div class="r" style="left:2013.0px;top:2016.8px;width:62.0px;height:6.7px;background:#080808;border-radius:2px"></div>
<div class="r" style="left:2013.0px;top:2033.8px;width:62.0px;height:6.7px;background:#080808;border-radius:2px"></div>
<div class="r" style="left:2013.0px;top:2050.8px;width:62.0px;height:6.7px;background:#080808;border-radius:2px"></div>
<div class="t" style="left:2116.7px;letter-spacing:0.46px;transform:scaleX(1.0155);transform-origin:0 50%;top:2013.1px;font-size:46px;line-height:46px;color:#465e7e;">Lunch</div>
<svg class="r" style="left:2734px;top:2012.9px" width="45" height="45" viewBox="0 0 45 45"><path d="M4.5,4.5 L40.5,40.5 M40.5,4.5 L4.5,40.5" stroke="#3b5577" stroke-width="4.2" fill="none"/></svg>
<div class="r" style="left:2571px;top:1999.9px;width:68px;height:67px;background:#3b5375;border-radius:5px"></div>
<div class="t" style="left:2579.0px;top:2016.3px;font-size:35px;line-height:35px;color:#fff;font-weight:bold;">HQ</div>
<div class="r" style="left:2013.0px;top:2167.1px;width:62.0px;height:6.7px;background:#080808;border-radius:2px"></div>
<div class="r" style="left:2013.0px;top:2184.1px;width:62.0px;height:6.7px;background:#080808;border-radius:2px"></div>
<div class="r" style="left:2013.0px;top:2201.1px;width:62.0px;height:6.7px;background:#080808;border-radius:2px"></div>
<div class="t" style="left:2116.7px;letter-spacing:0.46px;transform:scaleX(1.0176);transform-origin:0 50%;top:2163.4px;font-size:46px;line-height:46px;color:#465e7e;">Dinner</div>
<svg class="r" style="left:2734px;top:2163.3px" width="45" height="45" viewBox="0 0 45 45"><path d="M4.5,4.5 L40.5,40.5 M40.5,4.5 L4.5,40.5" stroke="#3b5577" stroke-width="4.2" fill="none"/></svg>
<div class="r" style="left:2571px;top:2150.3px;width:68px;height:67px;background:#3b5375;border-radius:5px"></div>
<div class="t" style="left:2579.0px;top:2166.7px;font-size:35px;line-height:35px;color:#fff;font-weight:bold;">HQ</div>
</div></div>
<div class="r" style="left:2858.5px;top:473.4px;width:25.5px;height:1823.6px;background:#dddddd;"></div>
<div class="r" style="left:2859.5px;top:1160.0px;width:20.3px;height:1137.0px;background:#898989;"></div>
<div class="r" style="left:2880.5px;top:270.0px;width:3.5px;height:2080.0px;background:rgba(255,255,255,.75);"></div>
<div class="r" style="left:24.0px;top:2348.0px;width:2860.0px;height:250.0px;background:#f7f7f7;"></div>
<div class="r" style="left:24.0px;top:2347.5px;width:2860.0px;height:3.0px;background:#dfe1e6;"></div>
<div class="r" style="left:24px;top:2351px;width:2860px;height:247px;box-sizing:border-box;border:3.5px solid #fff;border-top:none;border-radius:0 0 17px 17px"></div>
<div class="r" style="left:74.3px;top:2401.3px;width:1225.0px;height:146.0px;background:#a0a0a0;border-radius:13px"></div>
<div class="r" style="left:1550.5px;top:2401.3px;width:1283.0px;height:146.0px;background:#3b5373;border-radius:13px"></div>
<div class="t" style="left:615.0px;letter-spacing:0.07px;transform:scaleX(1.0025);transform-origin:0 50%;top:2451.5px;font-size:46px;line-height:46px;color:#fff;-webkit-text-stroke:0.9px #fff;">Cancel</div>
<div class="t" style="left:2093.9px;letter-spacing:0.79px;transform:scaleX(1.0304);transform-origin:0 50%;top:2451.5px;font-size:46px;line-height:46px;color:#fff;-webkit-text-stroke:0.9px #fff;">Continue</div>
<svg class="r" style="left:1350px;top:2450px" width="200" height="56" viewBox="0 0 200 56"><path d="M5,20.7 H155 V7.3 L196,28.3 L155,49.2 V35.8 H5 Z" fill="#5bbfc2"/></svg>
</div></div>
</body></html>
